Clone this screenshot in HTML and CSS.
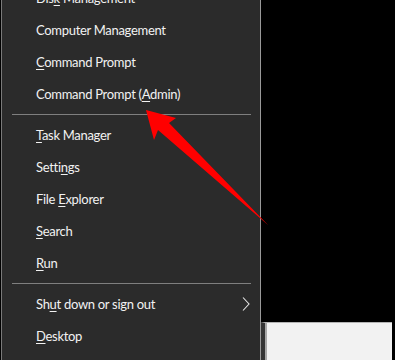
FILE: index.html
```html
<!DOCTYPE html>
<html lang="en">
<head>
    <meta charset="UTF-8">
    <meta name="viewport" content="width=device-width, initial-scale=1.0">
    <title>Power User Menu</title>
    <link rel="stylesheet" href="styles.css">
</head>
<body>

    <div class="screen">
        <div class="menu">
            <div class="menu-list">
                <div class="menu-item"><span>Dis<u>k</u> Management</span></div>
                <div class="menu-item"><span>Computer Management</span></div>
                <div class="menu-item"><span><u>C</u>ommand Prompt</span></div>
                <div class="menu-item"><span>Command Prompt (<u>A</u>dmin)</span></div>
                <div class="separator"></div>
                <div class="menu-item"><span><u>T</u>ask Manager</span></div>
                <div class="menu-item"><span>Setti<u>n</u>gs</span></div>
                <div class="menu-item"><span>File <u>E</u>xplorer</span></div>
                <div class="menu-item"><span><u>S</u>earch</span></div>
                <div class="menu-item"><span><u>R</u>un</span></div>
                <div class="separator"></div>
                <div class="menu-item">
                    <span>Sh<u>u</u>t down or sign out</span>
                    <svg class="chevron" width="8" height="14" viewBox="0 0 8 14">
                        <polyline points="1,0.5 7,7 1,13.5" fill="none" stroke="#e6e6e6" stroke-width="1.1"/>
                    </svg>
                </div>
                <div class="menu-item"><span><u>D</u>esktop</span></div>
            </div>
        </div>

        <div class="desktop-area">
            <div class="window"></div>
        </div>
    </div>

    <!-- red callout arrow pointing at "Command Prompt (Admin)" -->
    <svg class="arrow" width="395" height="360" viewBox="0 0 395 360">
        <polygon points="146,110 176,118 169,123 268,225 158,130 154,140" fill="#ff0000"/>
    </svg>

</body>
</html>
```

FILE: styles.css
```css
body {
    margin: 0;
    padding: 0;
    background-color: #000;
    font-family: Lato, "Noto Sans", Arial, sans-serif;
    overflow: hidden;
}

.screen {
    display: flex;
    height: 360px;
    width: 395px;
}

.menu {
    margin-left: 1px;
    width: 258px;
    height: 360px;
    background-color: #2b2b2b;
    border-left: 1px solid #7a7a7a;
    border-right: 1px solid #9a9a9a;
    overflow: hidden;
}

.menu-list {
    margin-top: -18px;
}

.menu-item {
    display: flex;
    align-items: center;
    height: 32px;
    padding-left: 34px;
    padding-right: 10px;
    color: #f2f2f2;
    font-size: 13px;
    letter-spacing: -0.3px;
    white-space: pre;
}

.menu-item u {
    text-underline-offset: 2px;
}

.chevron {
    margin-left: auto;
}

.separator {
    height: 1px;
    margin: 4px 9px 4px 10px;
    background-color: #7f7f7f;
}

.desktop-area {
    flex: 1;
    display: flex;
    flex-direction: column;
    padding-right: 3px;
}

.window {
    margin-top: 322px;
    flex: 1;
    background-color: #f2f2f2;
    border-top: 1px solid #b4b4b4;
    border-left: 4px solid #353535;
    box-shadow: inset 2px 0 0 #a8a8a8;
}

.arrow {
    position: absolute;
    top: 0;
    left: 0;
    pointer-events: none;
}
```
